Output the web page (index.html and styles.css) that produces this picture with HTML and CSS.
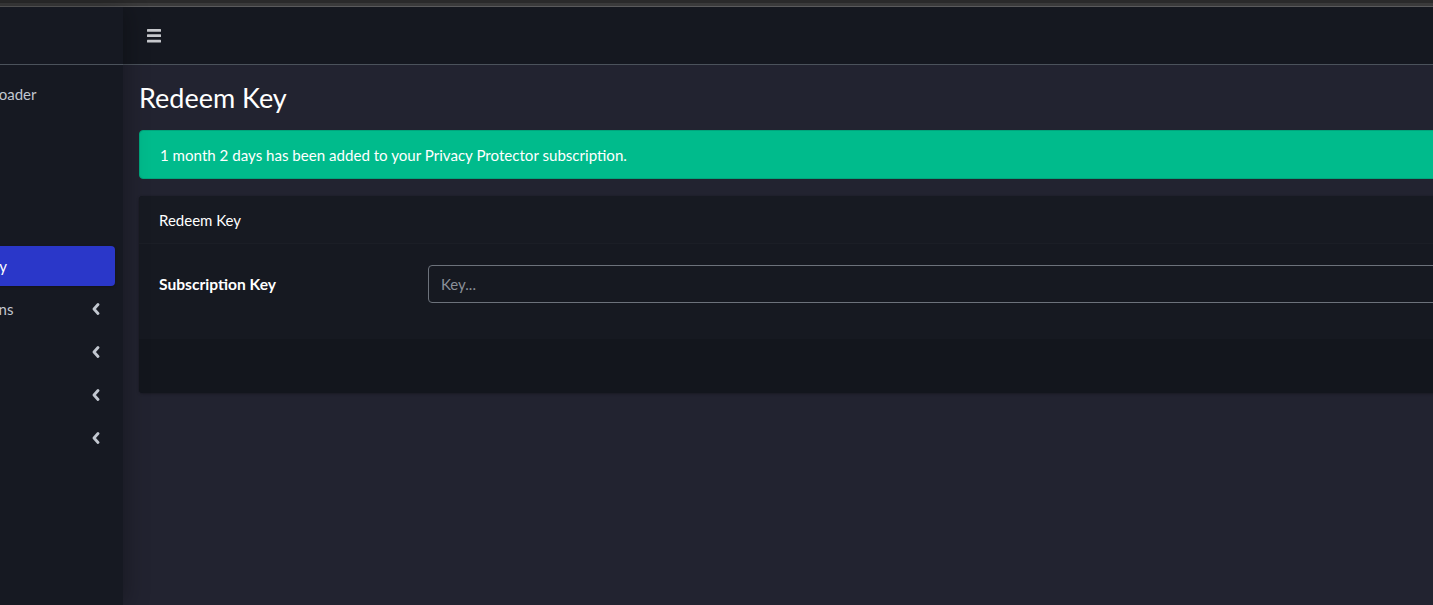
FILE: index.html
```html
<!DOCTYPE html>
<html lang="en">
<head>
<meta charset="utf-8">
<title>Redeem Key</title>
<link rel="stylesheet" href="styles.css">
</head>
<body>
<div class="chrome"></div>
<div class="app">
  <aside class="sidebar">
    <div class="brand"></div>
    <nav class="nav">
      <a class="nav-item nav-item-top"><span class="nav-icon"></span><span class="nav-label">Download Loader</span></a>
      <a class="nav-item"><span class="nav-icon"></span><span class="nav-label">Home</span></a>
      <a class="nav-item"><span class="nav-icon"></span><span class="nav-label">Store</span></a>
      <a class="nav-item"><span class="nav-icon"></span><span class="nav-label">Status</span></a>
      <a class="nav-item active"><span class="nav-icon"></span><span class="nav-label">Redeem Key</span></a>
      <a class="nav-item"><span class="nav-icon"></span><span class="nav-label">Subscriptions</span><svg class="chev" viewBox="0 0 8 12"><polyline points="6,1.5 2,6 6,10.5"/></svg></a>
      <a class="nav-item"><span class="nav-icon"></span><span class="nav-label">Account</span><svg class="chev" viewBox="0 0 8 12"><polyline points="6,1.5 2,6 6,10.5"/></svg></a>
      <a class="nav-item"><span class="nav-icon"></span><span class="nav-label">Support</span><svg class="chev" viewBox="0 0 8 12"><polyline points="6,1.5 2,6 6,10.5"/></svg></a>
      <a class="nav-item"><span class="nav-icon"></span><span class="nav-label">Help</span><svg class="chev" viewBox="0 0 8 12"><polyline points="6,1.5 2,6 6,10.5"/></svg></a>
    </nav>
  </aside>
  <div class="main">
    <header class="navbar">
      <svg class="burger" viewBox="0 0 14 14"><rect x="0" y="0" width="14" height="2.7" rx="0.5"/><rect x="0" y="5.3" width="14" height="2.7" rx="0.5"/><rect x="0" y="10.7" width="14" height="2.7" rx="0.5"/></svg>
    </header>
    <section class="content">
      <h1 class="page-title">Redeem Key</h1>
      <div class="alert">1 month 2 days has been added to your Privacy Protector subscription.</div>
      <div class="card">
        <div class="card-header">Redeem Key</div>
        <div class="card-body">
          <div class="form-row">
            <label class="form-label">Subscription Key</label>
            <div class="form-input"><input type="text" placeholder="Key..."></div>
          </div>
        </div>
        <div class="card-footer"></div>
      </div>
    </section>
  </div>
</div>
</body>
</html>
```
FILE: styles.css
```css
* { box-sizing: border-box; }
html, body {
  margin: 0;
  padding: 0;
  background: #222330;
  overflow: hidden;
  height: 605px;
  font-family: "Lato", "Noto Sans", sans-serif;
  color: #ffffff;
}
.chrome {
  height: 7px;
  background: linear-gradient(#2a2a2b 0, #2a2a2b 3px, #3a3a3b 3px, #3a3a3b 6px, #5a5a5c 6px, #5a5a5c 7px);
}
.app {
  display: flex;
  margin-left: -127px;
  width: 1700px;
  height: 598px;
}
.sidebar {
  width: 250px;
  flex: none;
  background: #161922;
  box-shadow: 3px 0 22px rgba(0, 0, 0, 0.28);
  position: relative;
  z-index: 2;
}
.brand {
  height: 58px;
  border-bottom: 1px solid #4b525b;
}
.nav {
  padding-top: 9px;
  display: flex;
  flex-direction: column;
  gap: 3px;
}
.nav-item {
  display: flex;
  align-items: center;
  height: 40px;
  margin: 0 8px;
  padding: 0 16px;
  border-radius: 4px;
  color: #c2c7d0;
  font-size: 15px;
}
.nav-icon {
  width: 28px;
  flex: none;
}
.nav-item-top .nav-icon { width: 23px; }
.nav-label { flex: 1; white-space: nowrap; }
.nav-item.active {
  background: #2a37c9;
  color: #ffffff;
  box-shadow: 0 1px 3px rgba(0,0,0,.25);
}
.chev {
  width: 8px;
  height: 12px;
  margin-right: -1px;
  fill: none;
  stroke: #c2c7d0;
  stroke-width: 2.8;
  stroke-linecap: round;
  stroke-linejoin: round;
}
.main {
  flex: 1;
  display: flex;
  flex-direction: column;
}
.navbar {
  height: 58px;
  background: #151820;
  border-bottom: 1px solid #4b525b;
  display: flex;
  align-items: center;
  padding-left: 24px;
}
.burger {
  width: 14px;
  height: 14px;
  fill: #c6c8cc;
  margin-top: 1px;
}
.content {
  padding: 13px 0 0 16px;
}
.page-title {
  margin: 0 0 12px;
  font-weight: 400;
  font-size: 27px;
  line-height: 40px;
  color: #ffffff;
}
.alert {
  height: 49px;
  background: #00bb8c;
  border: 1px solid #00a57c;
  border-radius: 4px;
  padding: 0 20px;
  display: flex;
  align-items: center;
  font-size: 15.1px;
  color: #ffffff;
  margin-bottom: 17px;
}
.card {
  background: #161921;
  border-radius: 4px;
  box-shadow: 0 0 1px rgba(0,0,0,.3), 0 1px 3px rgba(0,0,0,.25);
  overflow: hidden;
}
.card-header {
  height: 48px;
  background: #171a22;
  border-bottom: 1px solid rgba(255,255,255,0.02);
  padding: 0 20px;
  display: flex;
  align-items: center;
  font-size: 15px;
  color: #ffffff;
}
.card-body {
  padding: 21px 20px 36px;
}
.form-row {
  display: grid;
  grid-template-columns: 269px 1fr;
  align-items: center;
}
.form-label {
  font-weight: 700;
  font-size: 15.6px;
  color: #ffffff;
}
.form-input input {
  display: block;
  width: 100%;
  height: 38px;
  background: #161921;
  border: 1px solid #6c727b;
  border-radius: 4px;
  padding: 0 12px;
  font-family: inherit;
  font-size: 15px;
  color: #ffffff;
  outline: none;
}
.form-input input::placeholder { color: #8b9099; }
.card-footer {
  height: 54px;
  background: #13161d;
}
```
